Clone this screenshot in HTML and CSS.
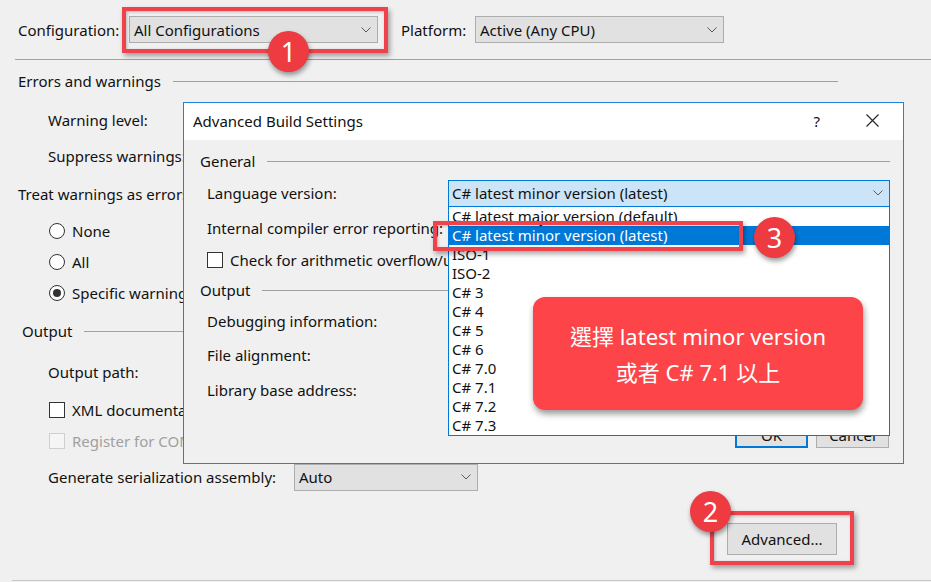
FILE: index.html
```html
<!DOCTYPE html>
<html lang="en">
<head>
<meta charset="utf-8">
<title>Build settings</title>
<link rel="stylesheet" href="styles.css">
</head>
<body>
<div class="page">
  <div class="toolbar">
    <span class="lbl-config">Configuration:</span>
    <div class="combo combo-config"><span>All Configurations</span><svg class="chev" width="10" height="6" viewBox="0 0 10 6"><polyline points="0.5,0.5 5,5 9.5,0.5"/></svg></div>
    <span class="lbl-platform">Platform:</span>
    <div class="combo combo-platform"><span>Active (Any CPU)</span><svg class="chev" width="10" height="6" viewBox="0 0 10 6"><polyline points="0.5,0.5 5,5 9.5,0.5"/></svg></div>
  </div>
  <div class="rule-top"></div>

  <div class="row grp grp-errors h42"><span>Errors and warnings</span><span class="line"></span></div>
  <div class="row ind h36">Warning level:</div>
  <div class="row ind h36">Suppress warnings:</div>
  <div class="row ind-18 h40">Treat warnings as errors</div>
  <div class="row ind h34"><span class="radio"></span>None</div>
  <div class="row ind h28"><span class="radio"></span>All</div>
  <div class="row ind h34"><span class="radio checked"></span>Specific warnings:</div>

  <div class="row grp grp-output h42"><span>Output</span><span class="line"></span></div>
  <div class="row ind h40">Output path:</div>
  <div class="row ind h36"><span class="check"></span>XML documentation file:</div>
  <div class="row ind h26 disabled"><span class="check"></span>Register for COM interop</div>
  <div class="row ind h46"><span class="lbl-serial">Generate serialization assembly:</span><div class="combo combo-serial"><span>Auto</span><svg class="chev" width="10" height="6" viewBox="0 0 10 6"><polyline points="0.5,0.5 5,5 9.5,0.5"/></svg></div></div>
  <div class="row adv-row h77"><div class="btn btn-adv">Advanced...</div></div>
  <div class="rule-bottom"></div>
</div>

<div class="dialog">
  <div class="titlebar">
    <span class="title">Advanced Build Settings</span>
    <span class="help">?</span>
    <svg class="close" width="13" height="13" viewBox="0 0 13 13"><path d="M0.5,0.5 L12.5,12.5 M12.5,0.5 L0.5,12.5"/></svg>
  </div>
  <div class="dbody">
    <div class="row dgrp h42"><span>General</span><span class="line"></span></div>
    <div class="row dind h22"><span class="dlbl">Language version:</span><div class="combo combo-lang"><span>C# latest minor version (latest)</span><svg class="chev" width="10" height="6" viewBox="0 0 10 6"><polyline points="0.5,0.5 5,5 9.5,0.5"/></svg></div></div>
    <div class="row dind h48 clip-row">Internal compiler error reporting:</div>
    <div class="row dind-cb h16 clip-row"><span class="check"></span>Check for arithmetic overflow/underflow</div>
    <div class="row dgrp h44"><span>Output</span><span class="line"></span></div>
    <div class="row dind h18">Debugging information:</div>
    <div class="row dind h50">File alignment:</div>
    <div class="row dind h20">Library base address:</div>
    <div class="dbuttons">
      <div class="btn btn-ok">OK</div>
      <div class="btn btn-cancel">Cancel</div>
    </div>
  </div>
  <ul class="droplist">
    <li>C# latest major version (default)</li>
    <li class="sel">C# latest minor version (latest)</li>
    <li>ISO-1</li>
    <li>ISO-2</li>
    <li>C# 3</li>
    <li>C# 4</li>
    <li>C# 5</li>
    <li>C# 6</li>
    <li>C# 7.0</li>
    <li>C# 7.1</li>
    <li>C# 7.2</li>
    <li>C# 7.3</li>
  </ul>
</div>

<div class="hl hl-1"></div>
<div class="hl hl-2"></div>
<div class="hl hl-3"></div>

<div class="callout">
  <div>選擇 latest minor version</div>
  <div>或者 C# 7.1 以上</div>
</div>

<div class="badge badge-1">1</div>
<div class="badge badge-2">2</div>
<div class="badge badge-3">3</div>
</body>
</html>
```

FILE: styles.css
```css
* { box-sizing: border-box; }
html, body { margin: 0; padding: 0; }
body {
  width: 931px;
  height: 582px;
  overflow: hidden;
  position: relative;
  background: #f0f0f0;
  font-family: "Noto Sans", "Open Sans", "Liberation Sans", sans-serif;
  font-size: 15px;
  color: #111;
}

.row { display: flex; align-items: center; white-space: nowrap; }
.h16 { height: 16px; } .h18 { height: 18px; } .h20 { height: 20px; } .h22 { height: 22px; }
.h26 { height: 26px; } .h28 { height: 28px; } .h34 { height: 34px; } .h36 { height: 36px; }
.h40 { height: 40px; } .h42 { height: 42px; } .h44 { height: 44px; } .h46 { height: 46px; }
.h48 { height: 48px; } .h50 { height: 50px; } .h77 { height: 77px; }

/* top toolbar */
.toolbar { height: 59px; display: flex; align-items: center; padding-left: 18px; }
.lbl-config { width: 111px; }
.lbl-platform { width: 74px; margin-left: 23px; }
.rule-top { height: 1px; background: #a0a0a0; margin-left: 15px; }
.rule-bottom { height: 1px; background: #c8c8c8; margin: 3px 0 0 12px; }

.combo {
  display: flex; align-items: center; justify-content: space-between;
  height: 27px; padding: 0 6px 0 4px;
  background: #e1e1e1; border: 1px solid #adadad;
}
.combo-config, .combo-platform { width: 249px; }
.chev { flex: none; }
.chev polyline { fill: none; stroke: #5a5a5a; stroke-width: 1; }

.grp { width: 838px; }
.grp .line, .dgrp .line { flex: 1; height: 1px; background: #a0a0a0; margin-left: 12px; }
.grp-errors { padding-left: 18px; }
.grp-output { padding-left: 22px; }
.ind { padding-left: 48px; }
.ind-18 { padding-left: 18px; }

.radio {
  width: 16px; height: 16px; border-radius: 50%;
  border: 1px solid #333; background: #fff;
  margin: 0 7px 0 1px; position: relative; flex: none;
}
.radio.checked::after {
  content: ""; position: absolute; left: 3px; top: 3px;
  width: 8px; height: 8px; border-radius: 50%; background: #333;
}
.check {
  width: 16px; height: 16px; border: 1px solid #333; background: #fff;
  margin: 0 7px 0 1px; flex: none;
}
.disabled { color: #a0a0a0; }
.disabled .check { border-color: #cfcfcf; background: #f5f5f5; }

.lbl-serial { width: 246px; }
.combo-serial { width: 184px; }

.adv-row { justify-content: flex-end; padding-right: 94px; }
.btn {
  display: flex; align-items: center; justify-content: center;
  background: #e1e1e1; border: 1px solid #adadad;
}
.btn-adv { width: 110px; height: 32px; }

/* dialog */
.dialog {
  position: absolute; left: 183px; top: 102px;
  width: 721px; height: 362px;
  border: 1px solid #1f84d6;
  background: #f0f0f0;
}
.titlebar {
  height: 37px; background: #fff;
  display: flex; align-items: center; padding: 0 24px 2px 9px;
}
.title { flex: 1; }
.help { margin-right: 46px; }
.close path { stroke: #222; stroke-width: 1.1; fill: none; }

.dgrp { padding: 0 13px 0 16px; }
.dind { padding-left: 23px; }
.dind-cb { padding-left: 22px; }
.clip-row { width: 264px; overflow: hidden; }
.dlbl { width: 241px; }
.combo-lang { width: 442px; background: #cce4f7; border-color: #0078d7; padding-left: 3px; }

.dbuttons { display: flex; justify-content: flex-end; gap: 8px; padding-right: 14px; margin-top: 21px; }
.btn-ok, .btn-cancel { width: 73px; height: 27px; }
.btn-ok { border: 2px solid #0078d7; }

.droplist {
  position: absolute; left: 264px; top: 103px;
  width: 442px; height: 230px;
  margin: 0; padding: 0; list-style: none;
  background: #fff; border: 1px solid #0078d7;
}
.droplist li { height: 19px; line-height: 19px; padding-left: 3px; white-space: nowrap; }
.droplist li.sel { background: #0078d7; color: #fff; }

/* annotations */
.hl {
  position: absolute; border: 4px solid #f0424a;
  box-shadow: 2px 3px 5px rgba(0,0,0,.35), inset 1px 1px 3px rgba(0,0,0,.25);
}
.hl-1 { left: 122px; top: 7px; width: 266px; height: 46px; }
.hl-2 { left: 710px; top: 511px; width: 144px; height: 54px; }
.hl-3 { left: 433px; top: 221px; width: 310px; height: 30px; }

.callout {
  position: absolute; left: 533px; top: 297px;
  width: 330px; height: 113px;
  background: #fd4448; border-radius: 12px;
  box-shadow: 1px 4px 6px rgba(0,0,0,.4);
  color: #fff; font-size: 22px; font-weight: 400;
  font-family: "Noto Sans", "Noto Sans CJK TC", sans-serif;
  display: flex; flex-direction: column; align-items: center; justify-content: center;
  gap: 6px; line-height: 30px;
}

.badge {
  position: absolute; width: 41px; height: 41px; border-radius: 50%;
  background: #ee3a41; color: #fff;
  font-size: 27px; line-height: 41px; text-align: center;
  box-shadow: 1px 3px 5px rgba(0,0,0,.4);
}
.badge-1 { left: 268px; top: 31px; }
.badge-2 { left: 690px; top: 491px; }
.badge-3 { left: 754px; top: 217px; }
```
